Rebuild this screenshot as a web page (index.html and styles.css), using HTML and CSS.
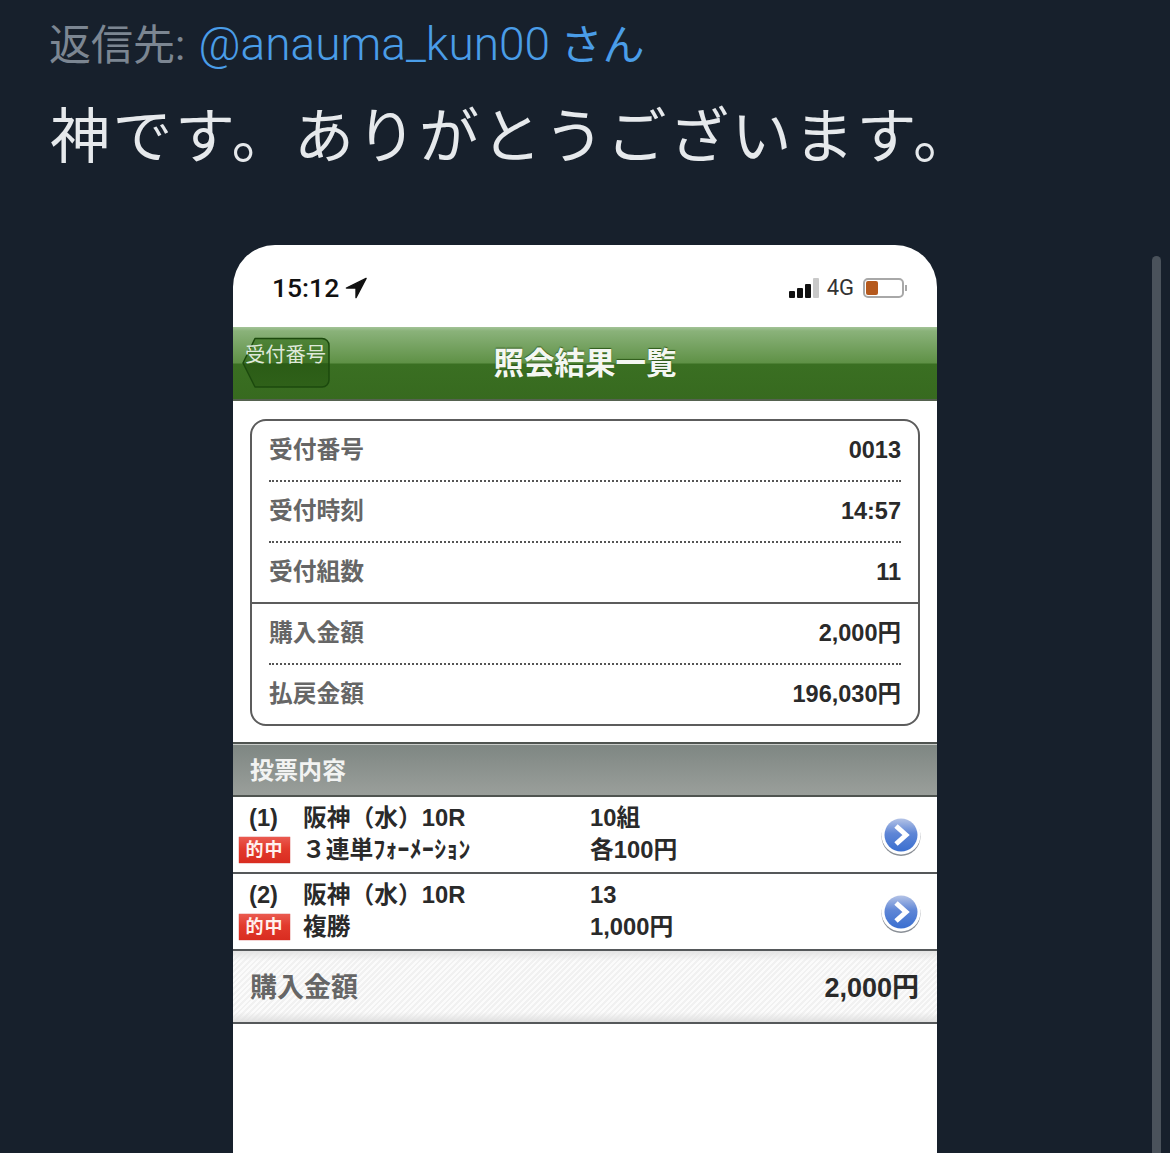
FILE: index.html
```html
<!DOCTYPE html>
<html lang="ja">
<head>
  <meta charset="utf-8">
  <title>神です。ありがとうございます。</title>
  <link rel="stylesheet" href="styles.css">
</head>
<body>
  <div class="tweet">
    <p class="reply-to">返信先: <a href="#">@anauma_kun00</a> <span class="san">さん</span></p>
    <p class="tweet-text">神です。ありがとうございます。</p>

    <div class="phone">
      <div class="status-bar">
        <div class="clock">
          <span>15:12</span>
          <svg class="location" width="22" height="22" viewBox="0 0 24 24"><path d="M23 1.500 1.500 12H12v10.500z" fill="#111" stroke="#111" stroke-width="1.500" stroke-linejoin="round"/></svg>
        </div>
        <div class="status-right">
          <span class="signal"><i class="s1"></i><i class="s2"></i><i class="s3"></i><i class="s4"></i></span>
          <span class="net">4G</span>
          <span class="battery"><i></i></span>
          <span class="battery-tip"></span>
        </div>
      </div>

      <div class="nav">
        <div class="back-btn">
          <svg class="back-shape" width="90" height="52" viewBox="0 0 90 52">
            <defs>
              <linearGradient id="backfill" x1="0" y1="0" x2="0" y2="1">
                <stop offset="0" stop-color="#4f8438"/>
                <stop offset=".5" stop-color="#3f7326"/>
                <stop offset=".52" stop-color="#2b5c16"/>
                <stop offset="1" stop-color="#2f6119"/>
              </linearGradient>
            </defs>
            <path d="M14 1.500H81a7 7 0 0 1 7 7V43a7 7 0 0 1-7 7H14L2 26z" fill="url(#backfill)" stroke="#1c4a0e" stroke-width="1.500" stroke-linejoin="round"/>
          </svg>
          <span class="back-label">受付番号</span>
        </div>
        <h1 class="nav-title">照会結果一覧</h1>
      </div>

      <div class="summary">
        <div class="sum-row dotted"><span class="sum-label">受付番号</span><b>0013</b></div>
        <div class="sum-row dotted"><span class="sum-label">受付時刻</span><b>14:57</b></div>
        <div class="sum-row solid"><span class="sum-label">受付組数</span><b>11</b></div>
        <div class="sum-row dotted"><span class="sum-label">購入金額</span><b>2,000円</b></div>
        <div class="sum-row last"><span class="sum-label">払戻金額</span><b>196,030円</b></div>
      </div>

      <div class="section-bar">投票内容</div>

      <div class="vote-row">
        <div class="vote-col">
          <div class="vote-line"><span class="num">(1)</span><span>阪神（水）10R</span></div>
          <div class="vote-line"><span class="hit">的中</span><span class="kind">３連単<span class="narrow">ﾌｫｰﾒｰｼｮﾝ</span></span></div>
        </div>
        <div class="vote-amount">
          <div>10組</div>
          <div>各100円</div>
        </div>
        <svg class="go" width="42" height="44" viewBox="0 0 42 44">
          <defs>
            <linearGradient id="blue" x1="0" y1="0" x2="0" y2="1">
              <stop offset="0" stop-color="#b4c3e6"/>
              <stop offset=".45" stop-color="#5f86d6"/>
              <stop offset="1" stop-color="#3a6fd0"/>
            </linearGradient>
          </defs>
          <circle cx="21" cy="22.500" r="19.500" fill="#8a8f96"/>
          <circle cx="21" cy="21" r="19.500" fill="#fff"/>
          <circle cx="21" cy="21" r="16.500" fill="url(#blue)"/>
          <path d="M16 12l10 9-10 9" fill="none" stroke="#fff" stroke-width="5"/>
        </svg>
      </div>

      <div class="vote-row">
        <div class="vote-col">
          <div class="vote-line"><span class="num">(2)</span><span>阪神（水）10R</span></div>
          <div class="vote-line"><span class="hit">的中</span><span>複勝</span></div>
        </div>
        <div class="vote-amount">
          <div>13</div>
          <div>1,000円</div>
        </div>
        <svg class="go" width="42" height="44" viewBox="0 0 42 44">
          <circle cx="21" cy="22.500" r="19.500" fill="#8a8f96"/>
          <circle cx="21" cy="21" r="19.500" fill="#fff"/>
          <circle cx="21" cy="21" r="16.500" fill="url(#blue)"/>
          <path d="M16 12l10 9-10 9" fill="none" stroke="#fff" stroke-width="5"/>
        </svg>
      </div>

      <div class="total-bar">
        <span class="total-label">購入金額</span>
        <b>2,000円</b>
      </div>
    </div>
  </div>

  <div class="scrollbar"></div>
</body>
</html>
```

FILE: styles.css
```css
html, body {
  margin: 0;
  height: 1153px;
  overflow: hidden;
}

body {
  background: #17202c;
  font-family: "Liberation Sans", "Noto Sans CJK JP", sans-serif;
  color: #2a2a2a;
  position: relative;
}

.tweet {
  padding-top: 18px;
}

.reply-to {
  margin: 0 0 0 49px;
  height: 52px;
  line-height: 52px;
  font-family: Roboto, "Noto Sans CJK JP", sans-serif;
  font-weight: 400;
  font-size: 42px;
  color: #7c8692;
  white-space: nowrap;
}

.reply-to a {
  margin-left: 3px;
  color: #4a9de8;
  text-decoration: none;
  font-size: 46px;
  font-weight: 300;
}

.reply-to .san {
  color: #4a9de8;
}

.tweet-text {
  margin: 27px 0 0 50px;
  height: 70px;
  line-height: 70px;
  font-family: "Noto Sans CJK JP", sans-serif;
  font-size: 60px;
  font-weight: 400;
  letter-spacing: 2.500px;
  color: #e6e9ec;
  white-space: nowrap;
}

.phone {
  margin: 78px 0 0 233px;
  width: 704px;
  height: 908px;
  background: #fff;
  border-radius: 42px 42px 0 0;
  overflow: hidden;
}

/* status bar */
.status-bar {
  height: 82px;
  padding: 3px 30px 0 39px;
  box-sizing: border-box;
  display: flex;
  justify-content: space-between;
  align-items: center;
}

.clock {
  display: flex;
  align-items: center;
  gap: 6px;
  font-family: Roboto, sans-serif;
  font-weight: 500;
  font-size: 26.500px;
  color: #111;
}

.status-right {
  display: flex;
  align-items: center;
  color: #333;
  font-family: Roboto, sans-serif;
  font-size: 22px;
}

.signal {
  display: flex;
  align-items: flex-end;
  gap: 2px;
  height: 20px;
  margin-right: 8px;
}

.signal i {
  width: 6px;
  border-radius: 1px;
  background: #111;
}

.signal .s1 { height: 7px; }
.signal .s2 { height: 10px; }
.signal .s3 { height: 14px; }
.signal .s4 { height: 20px; background: #c9c9c9; }

.net {
  margin-right: 9px;
}

.battery {
  width: 41px;
  height: 20px;
  box-sizing: border-box;
  border: 2px solid #a8a8a8;
  border-radius: 5px;
  padding: 1px;
  display: block;
}

.battery i {
  display: block;
  width: 12px;
  height: 14px;
  border-radius: 2px;
  background: #b5591d;
}

.battery-tip {
  width: 2px;
  height: 6px;
  margin-left: 1px;
  background: #a8a8a8;
}

/* green nav bar */
.nav {
  height: 74px;
  box-sizing: border-box;
  border-bottom: 2px solid #55624f;
  background: linear-gradient(#a3c397 0, #8ab27a 4px, #5f9146 36px, #3a6f22 37px, #376a1f 100%);
  display: flex;
  align-items: center;
  position: relative;
}

.back-btn {
  position: absolute;
  left: 8px;
  top: 10px;
  width: 90px;
  height: 52px;
}

.back-shape {
  position: absolute;
  left: 0;
  top: 0;
}

.back-label {
  position: absolute;
  left: 4px;
  top: 4px;
  font-size: 20.250px;
  line-height: 28px;
  color: #dfe9da;
  white-space: nowrap;
}

.nav-title {
  margin: 0 auto;
  padding-bottom: 4px;
  font-size: 30.500px;
  font-weight: 700;
  color: #f4f7f2;
  text-shadow: 0 -1px 1px #2e5a1a;
}

/* summary card */
.summary {
  margin: 18px 17px 0 17px;
  border: 2px solid #5c5c5c;
  border-radius: 16px;
}

.sum-row {
  height: 61px;
  box-sizing: border-box;
  margin: 0 17px;
  padding-top: 14px;
  display: flex;
  justify-content: space-between;
  align-items: baseline;
  font-size: 23.500px;
  line-height: 30px;
}

.sum-row.dotted {
  border-bottom: 2px dotted #555;
}

.sum-row.solid {
  margin: 0;
  padding: 14px 17px 0;
  border-bottom: 2px solid #5c5c5c;
}

.sum-row.last {
  height: 59px;
}

.sum-label {
  color: #666;
  font-weight: 700;
  font-size: 23.750px;
}

/* vote list */
.section-bar {
  margin-top: 16px;
  height: 55px;
  box-sizing: border-box;
  border-top: 2px solid #4f5450;
  border-bottom: 2px solid #4f5450;
  box-shadow: inset 0 1px 0 #c9ccc9;
  background: linear-gradient(#7e8682, #9a9f9b);
  padding: 0 0 2px 17px;
  display: flex;
  align-items: center;
  font-size: 24px;
  font-weight: 700;
  color: #f2f3f2;
}

.vote-row {
  height: 77px;
  box-sizing: border-box;
  border-bottom: 2px solid #55585a;
  display: flex;
  align-items: center;
  padding-right: 15px;
  font-size: 23.750px;
  font-weight: 700;
  line-height: 32px;
}

.vote-col {
  width: 357px;
  margin-bottom: 2px;
}

.vote-line {
  display: flex;
  align-items: center;
  height: 32px;
  white-space: nowrap;
}

.num {
  width: 54px;
  margin-left: 16px;
  flex: none;
}

.hit {
  width: 51px;
  height: 26px;
  margin: 0 13px 0 6px;
  flex: none;
  background: linear-gradient(#ea5a50, #e23a2c 45%, #d92c20);
  color: #fff0ee;
  font-size: 18px;
  line-height: 26px;
  text-align: center;
  letter-spacing: 1px;
  box-shadow: 0 0 1px #b00;
}

.kind {
  margin-left: -1px;
}

.narrow {
  display: inline-block;
  font-size: 23.750px;
  letter-spacing: .3px;
}

.vote-amount {
  flex: 1;
  margin-bottom: 2px;
}

.go {
  flex: none;
  margin-top: 3px;
}

/* total */
.total-bar {
  height: 73px;
  box-sizing: border-box;
  border-bottom: 2px solid #55585a;
  padding: 0 18px 2px 17px;
  background:
    linear-gradient(#e4e4e4, rgba(255,255,255,0) 10px, rgba(255,255,255,0) 61px, #e0e0e0),
    repeating-linear-gradient(135deg, #fbfbfb 0, #fbfbfb 2px, #f1f1f1 2px, #f1f1f1 4px);
  display: flex;
  justify-content: space-between;
  align-items: center;
  font-size: 27px;
}

.total-label {
  color: #666;
  font-weight: 700;
}

.scrollbar {
  position: absolute;
  left: 1152px;
  top: 256px;
  bottom: 0;
  width: 9px;
  border-radius: 5px 5px 0 0;
  background: #4a525b;
}
```
